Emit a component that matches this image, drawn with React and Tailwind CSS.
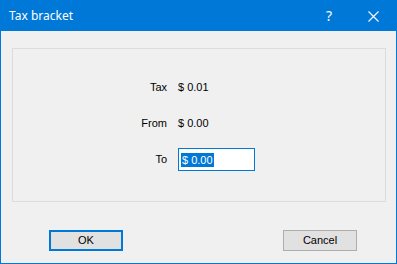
export default function App() {
  return (
    <div className="flex h-[264px] w-[397px] flex-col border border-[#0078d7] bg-[#f0f0f0] font-['Liberation_Sans',sans-serif] text-[11px] text-black">
      <div className="flex h-[30px] shrink-0 items-center bg-[#0078d7] text-white">
        <span className="ml-[8px] font-['Noto_Sans',sans-serif] text-[12px] leading-none">Tax bracket</span>
        <span className="ml-auto font-['Noto_Sans',sans-serif] text-[14px] leading-none">?</span>
        <svg className="ml-[36px] mr-[17px]" width="11" height="11" viewBox="0 0 11 11">
          <path d="M0.5 0.5 L10.5 10.5 M10.5 0.5 L0.5 10.5" stroke="white" strokeWidth="1.1" />
        </svg>
      </div>

      <div className="ml-[11px] mt-[17px] h-[154px] w-[374px] border border-[#dcdcdc]">
        <div className="flex flex-col pt-[30px]">
          <div className="flex h-[16px] items-center">
            <span className="w-[154px] text-right">Tax</span>
            <span className="ml-[11px]">$ 0.01</span>
          </div>
          <div className="mt-[20px] flex h-[16px] items-center">
            <span className="w-[154px] text-right">From</span>
            <span className="ml-[11px]">$ 0.00</span>
          </div>
          <div className="mt-[17px] flex items-center">
            <span className="w-[154px] text-right">To</span>
            <div className="ml-[11px] flex h-[23px] w-[77px] items-center border border-[#0078d7] bg-white pl-[2px]">
              <span className="bg-[#0078d7] px-[1px] leading-[14px] text-white">$ 0.00</span>
            </div>
          </div>
        </div>
      </div>

      <div className="mt-[28px] flex justify-between pl-[48px] pr-[39px]">
        <button className="flex h-[21px] w-[74px] items-center justify-center border-2 border-[#0078d7] bg-[#e1e1e1]">OK</button>
        <button className="flex h-[21px] w-[74px] items-center justify-center border border-[#adadad] bg-[#e1e1e1]">Cancel</button>
      </div>
    </div>
  );
}
